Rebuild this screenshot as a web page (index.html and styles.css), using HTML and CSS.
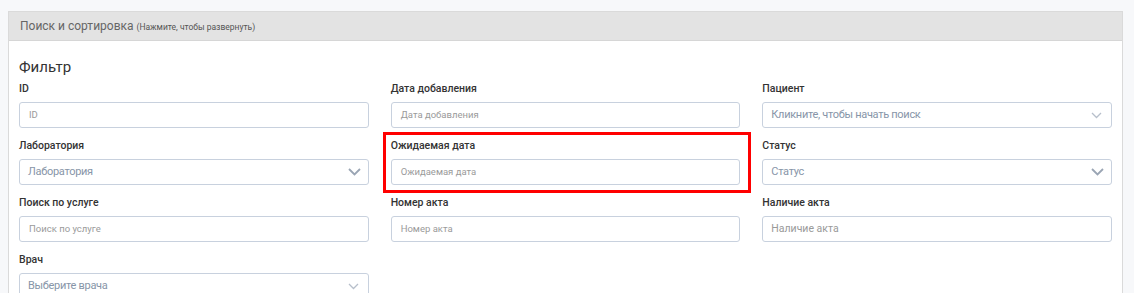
FILE: index.html
```html
<!DOCTYPE html>
<html lang="ru">
<head>
  <meta charset="UTF-8">
  <meta name="viewport" content="width=device-width, initial-scale=1">
  <title>Поиск и сортировка</title>
  <link rel="stylesheet" href="styles.css">
</head>
<body>

  <div class="panel">
    <div class="panel-head">
      Поиск и сортировка <small>(Нажмите, чтобы развернуть)</small>
    </div>
    <div class="panel-body">
      <h4>Фильтр</h4>
      <div class="grid">

        <div class="field">
          <label>ID</label>
          <div class="input">ID</div>
        </div>
        <div class="field">
          <label>Дата добавления</label>
          <div class="input">Дата добавления</div>
        </div>
        <div class="field">
          <label>Пациент</label>
          <div class="input select">
            Кликните, чтобы начать поиск
            <svg class="chev small" width="11" height="7" viewBox="0 0 11 7"><path d="M1 1l4.5 4.5L10 1" fill="none" stroke="#b7bfcb" stroke-width="1.3"/></svg>
          </div>
        </div>

        <div class="field">
          <label>Лаборатория</label>
          <div class="input select">
            Лаборатория
            <svg class="chev" width="13" height="8" viewBox="0 0 13 8"><path d="M1 1l5.5 5.5L12 1" fill="none" stroke="#9aa5b4" stroke-width="1.8"/></svg>
          </div>
        </div>
        <div class="field marked">
          <label>Ожидаемая дата</label>
          <div class="input">Ожидаемая дата</div>
        </div>
        <div class="field">
          <label>Статус</label>
          <div class="input select">
            Статус
            <svg class="chev" width="13" height="8" viewBox="0 0 13 8"><path d="M1 1l5.5 5.5L12 1" fill="none" stroke="#9aa5b4" stroke-width="1.8"/></svg>
          </div>
        </div>

        <div class="field">
          <label>Поиск по услуге</label>
          <div class="input">Поиск по услуге</div>
        </div>
        <div class="field">
          <label>Номер акта</label>
          <div class="input">Номер акта</div>
        </div>
        <div class="field">
          <label>Наличие акта</label>
          <div class="input big">Наличие акта</div>
        </div>

        <div class="field">
          <label>Врач</label>
          <div class="input select">
            Выберите врача
            <svg class="chev small" width="11" height="7" viewBox="0 0 11 7"><path d="M1 1l4.5 4.5L10 1" fill="none" stroke="#b7bfcb" stroke-width="1.3"/></svg>
          </div>
        </div>

      </div>
    </div>
  </div>

</body>
</html>
```

FILE: styles.css
```css
body {
  margin: 0;
  padding: 11px 0 0 8px;
  background: #f7f8fa;
  font-family: Roboto, "Liberation Sans", Arial, sans-serif;
  color: #333;
  height: 282px;
  overflow: hidden;
}

.panel {
  width: 1113px;
  border: 1px solid #dadada;
  background: #fff;
}

.panel-head {
  background: #e3e3e3;
  border-bottom: 1px solid #d6d6d6;
  height: 28px;
  line-height: 29px;
  padding-left: 11px;
  font-size: 12px;
  color: #666;
}

.panel-head small {
  font-size: 8.5px;
  color: #555;
}

.panel-body {
  padding: 16px 10px 10px;
}

h4 {
  margin: 0 0 4px;
  font-size: 15px;
  font-weight: normal;
  line-height: 20px;
  color: #333;
}

.grid {
  display: grid;
  grid-template-columns: repeat(3, 1fr);
  column-gap: 22px;
  row-gap: 10px;
}

.field label {
  display: block;
  font-size: 10.5px;
  font-weight: 500;
  line-height: 16px;
  margin-bottom: 5px;
  color: #333;
}

.field.marked {
  position: relative;
}

.field.marked::after {
  content: "";
  position: absolute;
  left: -8px;
  right: -11px;
  top: -6px;
  bottom: -8px;
  border: 3px solid #ff0000;
}

.input {
  height: 26px;
  box-sizing: border-box;
  border: 1px solid #c8d1de;
  border-radius: 3px;
  padding: 0 9px;
  font-size: 9.5px;
  line-height: 24px;
  color: #9a9a9a;
  background: #fff;
}

.input.big {
  font-size: 10.5px;
  color: #999;
  padding-left: 8px;
}

.select {
  display: flex;
  align-items: center;
  justify-content: space-between;
  font-size: 11px;
  letter-spacing: -0.3px;
  color: #8795a8;
  padding-left: 8px;
  padding-right: 7px;
}

.chev.small {
  margin-right: 2px;
}
```
